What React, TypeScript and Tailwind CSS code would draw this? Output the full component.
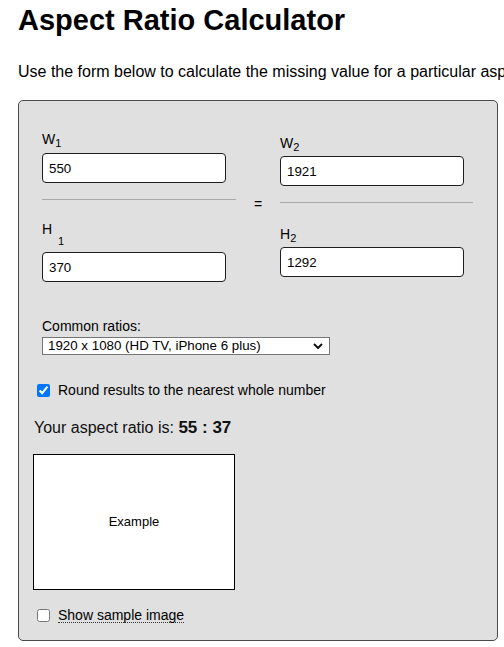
import React from 'react';

const sans = "font-['Liberation_Sans',Arial,sans-serif]";

const Field = ({ value }: { value: string }) => (
  <input
    type="text"
    defaultValue={value}
    className="block h-[30px] w-[184px] rounded-[4px] border border-[#1f1f1f] bg-white pl-[6px] text-[13.33px] text-black outline-none"
  />
);

export default function App() {
  return (
    <div className={`w-full overflow-hidden bg-white pb-[6px] text-black ${sans}`}>
      <h1 className="ml-[18px] mt-[6px] text-[29px] font-bold leading-none">Aspect Ratio Calculator</h1>
      <p className="ml-[18px] mt-[29px] whitespace-nowrap text-[16px] leading-none">
        Use the form below to calculate the missing value for a particular aspect ratio.
      </p>

      <div className="ml-[18px] mt-[20px] w-[480px] rounded-[5px] border border-[#4a4a4a] bg-[#e0e0e0] pb-[17px]">
        {/* width / height pairs */}
        <div className="flex pl-[23px]">
          <div className="flex w-[194px] flex-col">
            <div className="mt-[31px] h-[14px] text-[14px] leading-none">
              W<sub className="text-[11px]">1</sub>
            </div>
            <div className="mt-[7px]">
              <Field value="550" />
            </div>
            <div className="mt-[16px] h-px w-[194px] bg-[#a9a9a9]" />
            <div className="mt-[22px] h-[14px] text-[14px] leading-none">H</div>
            <div className="h-[11px] pl-[16px] text-[11px] leading-none">1</div>
            <div className="mt-[5px]">
              <Field value="370" />
            </div>
          </div>

          <div className="flex w-[44px] justify-center">
            <span className="mt-[96px] h-[14px] text-[14px] leading-none">=</span>
          </div>

          <div className="flex w-[193px] flex-col">
            <div className="mt-[35px] h-[14px] text-[14px] leading-none">
              W<sub className="text-[11px]">2</sub>
            </div>
            <div className="mt-[6px]">
              <Field value="1921" />
            </div>
            <div className="mt-[16px] h-px w-[193px] bg-[#a9a9a9]" />
            <div className="mt-[24px] h-[14px] text-[14px] leading-none">
              H<sub className="text-[11px]">2</sub>
            </div>
            <div className="mt-[6px]">
              <Field value="1292" />
            </div>
          </div>
        </div>

        {/* common ratios */}
        <div className="ml-[23px] mt-[37px] text-[14px] leading-none">Common ratios:</div>
        <div className="relative ml-[23px] mt-[4px] w-[288px]">
          <select
            defaultValue="1920x1080"
            className="block h-[18px] w-[288px] appearance-none border border-[#767676] bg-white pl-[5px] text-[13.33px] leading-none text-black outline-none"
          >
            <option value="1920x1080">1920 x 1080 (HD TV, iPhone 6 plus)</option>
          </select>
          <svg
            className="pointer-events-none absolute right-[7px] top-[6px]"
            width="10"
            height="6"
            viewBox="0 0 10 6"
          >
            <polyline points="1,1 5,5 9,1" fill="none" stroke="#111" strokeWidth="2" />
          </svg>
        </div>

        <label className="ml-[18px] mt-[28px] flex items-center gap-[8px] text-[14px] leading-none">
          <input type="checkbox" defaultChecked className="h-[13px] w-[13px]" />
          <span>Round results to the nearest whole number</span>
        </label>

        <div className="ml-[15px] mt-[22px] text-[16px] leading-none text-[#111]">
          Your aspect ratio is: <b className="text-[17px] font-bold">55 : 37</b>
        </div>

        <div className="ml-[14px] mt-[18px] flex h-[136px] w-[202px] items-center justify-center border border-black bg-white text-[13px]">
          Example
        </div>

        <label className="ml-[18px] mt-[18px] flex items-center gap-[8px] text-[14px] leading-none">
          <input type="checkbox" className="h-[13px] w-[13px]" />
          <span className="border-b border-dotted border-[#333]">Show sample image</span>
        </label>
      </div>
    </div>
  );
}
